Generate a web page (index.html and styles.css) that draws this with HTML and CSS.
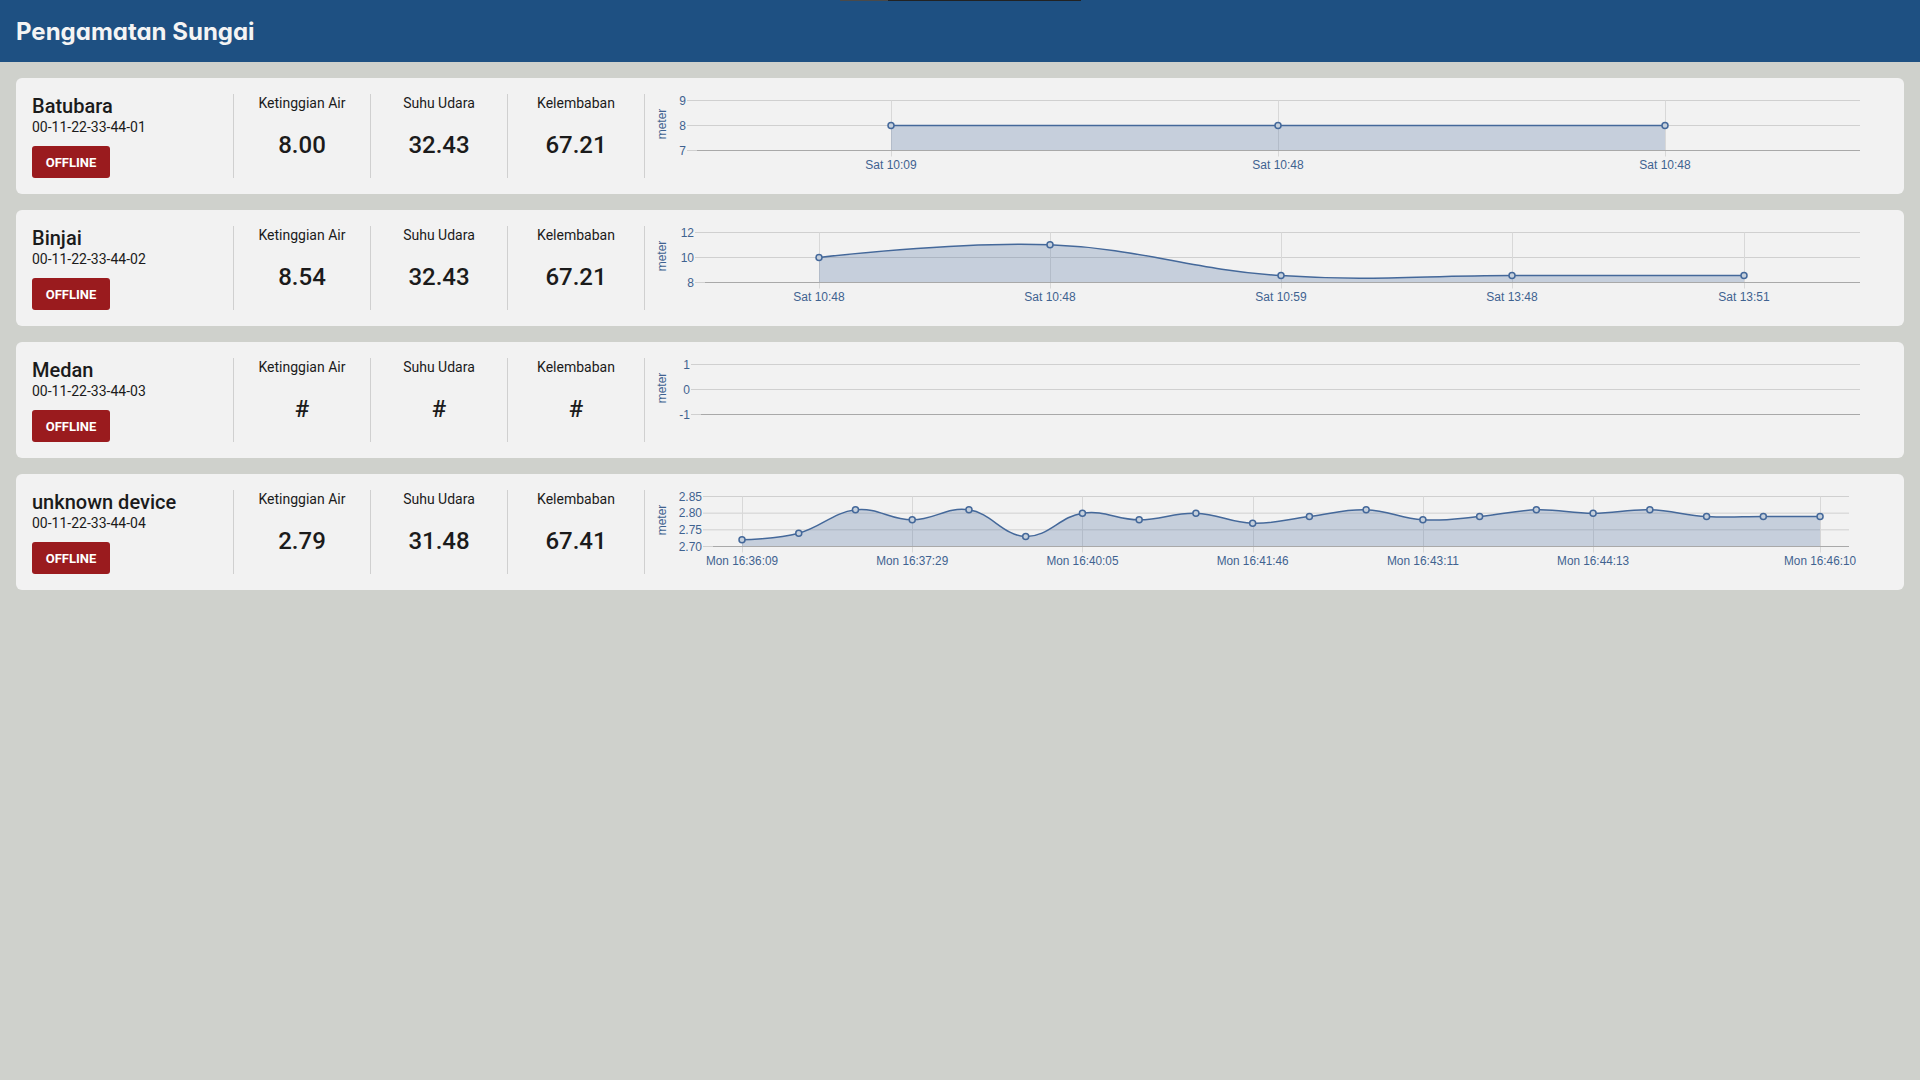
FILE: index.html
```html
<!DOCTYPE html>
<html lang="id">
<head>
<meta charset="utf-8">
<title>Pengamatan Sungai</title>
<link rel="stylesheet" href="styles.css">
</head>
<body>
<div class="notch"><span class="notch-a"></span><span class="notch-b"></span></div>
<header class="topbar">
  <h1 class="title">Pengamatan Sungai</h1>
</header>
<main class="list">
  <section class="card">
    <div class="device">
      <div class="device-name">Batubara</div>
      <div class="device-id">00-11-22-33-44-01</div>
      <span class="badge">OFFLINE</span>
    </div>
    <div class="metric"><div class="metric-label">Ketinggian Air</div><div class="metric-value">8.00</div></div>
    <div class="metric"><div class="metric-label">Suhu Udara</div><div class="metric-value">32.43</div></div>
    <div class="metric"><div class="metric-label">Kelembaban</div><div class="metric-value">67.21</div></div>
    <div class="chart"><svg class="chart-svg" data-chart="batubara" width="100%" height="84"></svg></div>
  </section>
  <section class="card">
    <div class="device">
      <div class="device-name">Binjai</div>
      <div class="device-id">00-11-22-33-44-02</div>
      <span class="badge">OFFLINE</span>
    </div>
    <div class="metric"><div class="metric-label">Ketinggian Air</div><div class="metric-value">8.54</div></div>
    <div class="metric"><div class="metric-label">Suhu Udara</div><div class="metric-value">32.43</div></div>
    <div class="metric"><div class="metric-label">Kelembaban</div><div class="metric-value">67.21</div></div>
    <div class="chart"><svg class="chart-svg" data-chart="binjai" width="100%" height="84"></svg></div>
  </section>
  <section class="card">
    <div class="device">
      <div class="device-name">Medan</div>
      <div class="device-id">00-11-22-33-44-03</div>
      <span class="badge">OFFLINE</span>
    </div>
    <div class="metric"><div class="metric-label">Ketinggian Air</div><div class="metric-value">#</div></div>
    <div class="metric"><div class="metric-label">Suhu Udara</div><div class="metric-value">#</div></div>
    <div class="metric"><div class="metric-label">Kelembaban</div><div class="metric-value">#</div></div>
    <div class="chart"><svg class="chart-svg" data-chart="medan" width="100%" height="84"></svg></div>
  </section>
  <section class="card">
    <div class="device">
      <div class="device-name">unknown device</div>
      <div class="device-id">00-11-22-33-44-04</div>
      <span class="badge">OFFLINE</span>
    </div>
    <div class="metric"><div class="metric-label">Ketinggian Air</div><div class="metric-value">2.79</div></div>
    <div class="metric"><div class="metric-label">Suhu Udara</div><div class="metric-value">31.48</div></div>
    <div class="metric"><div class="metric-label">Kelembaban</div><div class="metric-value">67.41</div></div>
    <div class="chart"><svg class="chart-svg" data-chart="unknown" width="100%" height="84"></svg></div>
  </section>
</main>
<script src="script.js"></script>
</body>
</html>
```

FILE: styles.css
```css
* { box-sizing: border-box; }

html, body {
  margin: 0;
  padding: 0;
}

body {
  background: #cfd1cc;
  font-family: Roboto, "Noto Sans", Arial, sans-serif;
  color: #1b1b1b;
  min-height: 1080px;
}

.notch {
  position: absolute;
  top: 0;
  left: 840px;
  display: flex;
  height: 1px;
  z-index: 5;
}
.notch-a { width: 48px; background: #4a4a4a; }
.notch-b { width: 193px; background: #222222; }

.topbar {
  height: 62px;
  background: #1e5082;
  display: flex;
  align-items: center;
  padding: 0 16px;
}

.title {
  margin: 0;
  font-family: Inter, "Noto Sans", sans-serif;
  font-feature-settings: "cv11" 1;
  font-weight: 700;
  font-size: 24px;
  letter-spacing: 0;
  color: #f4f4f4;
}

.list {
  display: flex;
  flex-direction: column;
  gap: 16px;
  padding: 16px;
}

.card {
  display: flex;
  background: #f2f2f2;
  border-radius: 6px;
  padding: 16px;
  height: 116px;
}

.device {
  flex: none;
  width: 201px;
  display: flex;
  flex-direction: column;
  align-items: flex-start;
}

.device-name {
  font-size: 20px;
  line-height: 24px;
  font-weight: 500;
  color: #1b1b1b;
}

.device-id {
  margin-top: 1px;
  font-size: 14px;
  line-height: 16px;
  color: #1b1b1b;
}

.badge {
  margin-top: 11px;
  width: 78px;
  height: 32px;
  display: flex;
  align-items: center;
  justify-content: center;
  background: #9a1b1e;
  color: #ffffff;
  font-size: 13px;
  font-weight: 700;
  border-radius: 3px;
}

.metric {
  flex: none;
  width: 137px;
  border-left: 1px solid #d0d0d0;
  text-align: center;
}

.metric-label {
  font-size: 14px;
  line-height: 18px;
  color: #1b1b1b;
}

.metric-value {
  margin-top: 19px;
  font-size: 24px;
  line-height: 28px;
  font-weight: 500;
  color: #1b1b1b;
}

.chart {
  flex: 1;
  min-width: 0;
  border-left: 1px solid #d0d0d0;
}

.chart-svg {
  display: block;
  overflow: visible;
}

.chart-svg text {
  font-family: "Liberation Sans", Arial, sans-serif;
  font-size: 12px;
  fill: #3f6290;
}

.grid-h { stroke: #d0d0d0; stroke-width: 1; }
.grid-v { stroke: #d8d8d8; stroke-width: 1; }
.axis { stroke: #a9a9a9; stroke-width: 1; }
.area { fill: #44689a; fill-opacity: 0.25; stroke: none; }
.line { fill: none; stroke: #44689a; stroke-width: 1.5; }
.marker { fill: #c6d0dc; stroke: #44689a; stroke-width: 1.5; }
```

FILE: script.js
```js
(function () {
  var NS = 'http://www.w3.org/2000/svg';
  var TOP = 6.5, BOTTOM = 56.5;

  var unknownValues = [2.72, 2.74, 2.81, 2.78, 2.81, 2.73, 2.80, 2.78, 2.80, 2.77,
                       2.79, 2.81, 2.78, 2.79, 2.81, 2.80, 2.81, 2.79, 2.79, 2.79];
  var unknownPoints = unknownValues.map(function (v, i) { return [97 + i * 56.74, v]; });
  var unknownLabelIdx = [0, 3, 6, 9, 12, 15, 19];
  var unknownLabelText = ['Mon 16:36:09', 'Mon 16:37:29', 'Mon 16:40:05', 'Mon 16:41:46',
                          'Mon 16:43:11', 'Mon 16:44:13', 'Mon 16:46:10'];

  var charts = {
    batubara: {
      left: 52, right: 1215, min: 7, max: 9,
      yLabels: ['9', '8', '7'],
      points: [[246, 8], [633, 8], [1020, 8]],
      xLabels: [[246, 'Sat 10:09'], [633, 'Sat 10:48'], [1020, 'Sat 10:48']]
    },
    binjai: {
      left: 60, right: 1215, min: 8, max: 12,
      yLabels: ['12', '10', '8'],
      points: [[174, 10], [405, 11.02], [636, 8.55], [867, 8.55], [1099, 8.55]],
      xLabels: [[174, 'Sat 10:48'], [405, 'Sat 10:48'], [636, 'Sat 10:59'], [867, 'Sat 13:48'], [1099, 'Sat 13:51']]
    },
    medan: {
      left: 56, right: 1215, min: -1, max: 1,
      yLabels: ['1', '0', '-1'],
      points: [],
      xLabels: []
    },
    unknown: {
      left: 68, right: 1204, min: 2.70, max: 2.85,
      yLabels: ['2.85', '2.80', '2.75', '2.70'],
      points: unknownPoints,
      xLabels: unknownLabelIdx.map(function (idx, k) { return [unknownPoints[idx][0], unknownLabelText[k]]; }),
      labelLength: 72
    }
  };

  function el(tag, attrs, text) {
    var n = document.createElementNS(NS, tag);
    for (var k in attrs) n.setAttribute(k, attrs[k]);
    if (text !== undefined) n.textContent = text;
    return n;
  }

  function f(n) { return (Math.round(n * 100) / 100).toString(); }

  function spline(pts) {
    var d = 'M ' + f(pts[0].x) + ' ' + f(pts[0].y);
    var prevRC = null;
    for (var i = 1; i < pts.length; i++) {
      var p = pts[i], last = pts[i - 1], next = pts[i + 1];
      var lcx = p.x, lcy = p.y, rc = null;
      if (next) {
        lcx = (1.5 * p.x + last.x) / 2.5;
        lcy = (1.5 * p.y + last.y) / 2.5;
        var rcx = (1.5 * p.x + next.x) / 2.5;
        var rcy = (1.5 * p.y + next.y) / 2.5;
        var corr = ((rcy - lcy) * (rcx - p.x)) / (rcx - lcx) + p.y - rcy;
        lcy += corr; rcy += corr;
        rc = { x: rcx, y: rcy };
      }
      var a = prevRC || last;
      d += ' C ' + f(a.x) + ' ' + f(a.y) + ' ' + f(lcx) + ' ' + f(lcy) + ' ' + f(p.x) + ' ' + f(p.y);
      prevRC = rc;
    }
    return d;
  }

  var svgs = document.querySelectorAll('svg[data-chart]');
  Array.prototype.forEach.call(svgs, function (svg) {
    var c = charts[svg.getAttribute('data-chart')];
    if (!c) return;
    var n = c.yLabels.length;
    var step = (BOTTOM - TOP) / (n - 1);

    c.yLabels.forEach(function (lab, i) {
      var y = TOP + i * step;
      svg.appendChild(el('line', { 'class': 'grid-h', x1: c.left - 10, x2: c.right, y1: y, y2: y }));
      svg.appendChild(el('text', { x: c.left - 11, y: f(y + 4), 'text-anchor': 'end' }, lab));
    });

    c.xLabels.forEach(function (xl) {
      var x = Math.round(xl[0]) + 0.5;
      svg.appendChild(el('line', { 'class': 'grid-v', x1: x, x2: x, y1: TOP, y2: BOTTOM + 6 }));
    });

    var pts = c.points.map(function (p) {
      return { x: p[0], y: BOTTOM - (p[1] - c.min) / (c.max - c.min) * (BOTTOM - TOP) };
    });

    if (pts.length) {
      var d = spline(pts);
      svg.appendChild(el('path', {
        'class': 'area',
        d: d + ' L ' + f(pts[pts.length - 1].x) + ' ' + BOTTOM + ' L ' + f(pts[0].x) + ' ' + BOTTOM + ' Z'
      }));
    }

    svg.appendChild(el('line', { 'class': 'axis', x1: c.left, x2: c.right, y1: BOTTOM, y2: BOTTOM }));

    if (pts.length) {
      svg.appendChild(el('path', { 'class': 'line', d: spline(pts) }));
      pts.forEach(function (p) {
        svg.appendChild(el('circle', { 'class': 'marker', cx: f(p.x), cy: f(p.y), r: 3 }));
      });
    }

    c.xLabels.forEach(function (xl) {
      var attrs = { x: f(xl[0]), y: 74.5, 'text-anchor': 'middle' };
      if (c.labelLength) {
        attrs.textLength = c.labelLength;
        attrs.lengthAdjust = 'spacingAndGlyphs';
      }
      svg.appendChild(el('text', attrs, xl[1]));
    });

    var g = el('g', { transform: 'translate(21 30) rotate(-90)' });
    g.appendChild(el('text', { x: 0, y: 0, 'text-anchor': 'middle' }, 'meter'));
    svg.appendChild(g);
  });
})();
```
